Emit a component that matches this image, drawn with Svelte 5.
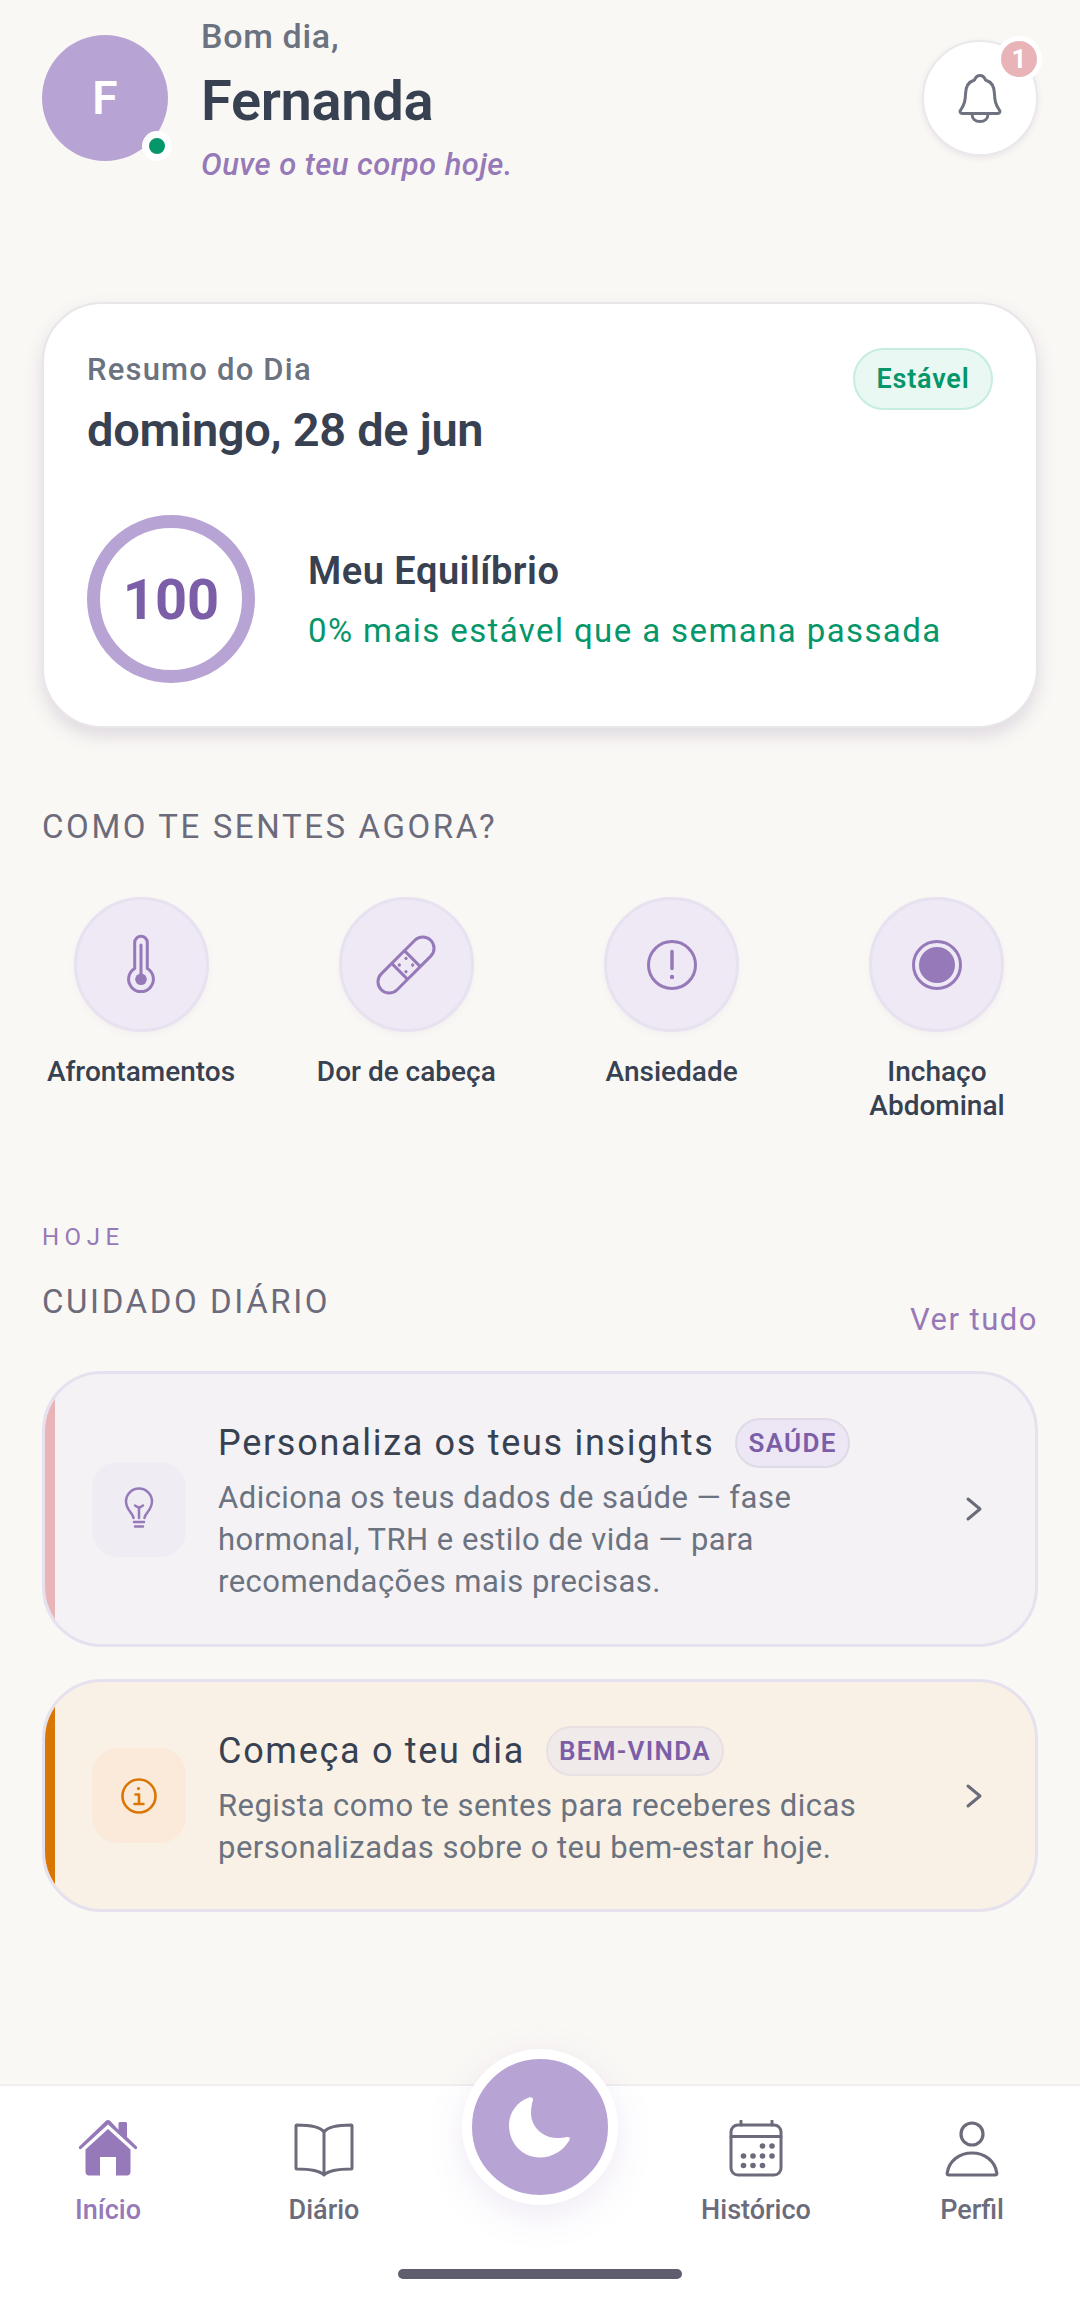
<script lang="ts">
  const symptoms = [
    { id: "thermo", label: "Afrontamentos" },
    { id: "band", label: "Dor de cabeça" },
    { id: "alert", label: "Ansiedade" },
    { id: "target", label: "Inchaço Abdominal" },
  ];
</script>

<div class="screen">
  <main>
    <header>
      <div class="avatar">
        F
        <span class="online"></span>
      </div>
      <div class="hello">
        <p class="greet">Bom dia,</p>
        <h1>Fernanda</h1>
        <p class="motto">Ouve o teu corpo hoje.</p>
      </div>
      <button class="bell" aria-label="Notificações">
        <svg width="44" height="50" viewBox="0 0 44 50" fill="none" stroke="#6f7280" stroke-width="3" stroke-linecap="round" stroke-linejoin="round">
          <path d="M22 2.500c-3 0-4.500 2-5.500 4.500C10 9 7.500 14 7.500 21c0 8-2 12-4.500 15.500-1.500 2-1 4 1 4h36c2 0 2.500-2 1-4-2.500-3.500-4.500-7.500-4.500-15.500 0-7-2.500-12-9-14C26.500 4.500 25 2.500 22 2.500z" />
          <path d="M14 41c0 5 3.500 7.500 8 7.500s8-2.500 8-7.500" />
        </svg>
        <span class="badge">1</span>
      </button>
    </header>

    <section class="summary">
      <div class="summary-top">
        <div>
          <p class="resumo">Resumo do Dia</p>
          <h2>domingo, 28 de jun</h2>
        </div>
        <span class="stable">Estável</span>
      </div>
      <div class="balance">
        <div class="ring">100</div>
        <div>
          <h3>Meu Equilíbrio</h3>
          <p class="delta">0% mais estável que a semana passada</p>
        </div>
      </div>
    </section>

    <h4 class="feel">COMO TE SENTES AGORA?</h4>
    <div class="symptoms">
      {#each symptoms as s}
        <div class="symptom">
          <div class="sym-icon">
            <svg width="62" height="62" viewBox="0 0 62 62" fill="none" stroke="#9679b8" stroke-width="3">
              {#if s.id === "thermo"}
                <path d="M24.700 8.600a6.300 6.300 0 0 1 12.600 0V34.500a12.400 12.400 0 1 1-12.600 0z" />
                <path d="M31 11v31" stroke-linecap="round" />
                <circle cx="31" cy="45.300" r="5.800" fill="#9679b8" stroke="none" />
              {:else if s.id === "band"}
                <g transform="rotate(45 31 31)">
                  <rect x="19.750" y="-4" width="22.500" height="70" rx="11.250" />
                  <path d="M19.750 22h22.500M19.750 40h22.500" />
                  <g fill="#9679b8" stroke="none">
                    <circle cx="26.300" cy="26.300" r="1.600" />
                    <circle cx="35.700" cy="26.300" r="1.600" />
                    <circle cx="26.300" cy="35.700" r="1.600" />
                    <circle cx="35.700" cy="35.700" r="1.600" />
                  </g>
                </g>
              {:else if s.id === "alert"}
                <circle cx="31" cy="31" r="23.500" />
                <path d="M31 17.500v17" stroke-width="3.500" stroke-linecap="round" />
                <circle cx="31" cy="43" r="2.200" fill="#9679b8" stroke="none" />
              {:else}
                <circle cx="31" cy="31" r="23.500" />
                <circle cx="31" cy="31" r="18" fill="#9679b8" stroke="none" />
              {/if}
            </svg>
          </div>
          <span>{s.label}</span>
        </div>
      {/each}
    </div>

    <p class="today">HOJE</p>
    <div class="care-head">
      <h4>CUIDADO DIÁRIO</h4>
      <a href="#top">Ver tudo</a>
    </div>

    <article class="task health">
      <div class="task-icon">
        <svg width="36" height="44" viewBox="0 0 36 44" fill="none" stroke="#9679b8" stroke-width="2.500" stroke-linecap="round" stroke-linejoin="round">
          <path d="M12.500 31c0-4-7.500-8-7.500-16.500a13 13 0 0 1 26 0C31 23 23.500 27 23.500 31" />
          <path d="M18 31V20M14 18.500l4 2.500 4-2.500" />
          <path d="M13 35h10M14 39.500h8" />
        </svg>
      </div>
      <div class="task-body">
        <div class="task-title"><h5>Personaliza os teus insights</h5><span class="tag">SAÚDE</span></div>
        <p>Adiciona os teus dados de saúde — fase hormonal, TRH e estilo de vida — para recomendações mais precisas.</p>
      </div>
      <svg class="chev" width="18" height="26" viewBox="0 0 18 26" fill="none" stroke="#6b6b7b" stroke-width="3" stroke-linecap="round" stroke-linejoin="round"><path d="M3 3l12 10L3 23" /></svg>
    </article>

    <article class="task welcome">
      <div class="task-icon">
        <svg width="38" height="38" viewBox="0 0 38 38" fill="none" stroke="#d97706" stroke-width="2.600" stroke-linecap="round" stroke-linejoin="round">
          <circle cx="19" cy="19" r="16.500" />
          <path d="M15.500 17.500H19v9M14.500 27h9" />
          <circle cx="18.500" cy="11.500" r="1.600" fill="#d97706" stroke="none" />
        </svg>
      </div>
      <div class="task-body">
        <div class="task-title"><h5>Começa o teu dia</h5><span class="tag">BEM-VINDA</span></div>
        <p>Regista como te sentes para receberes dicas personalizadas sobre o teu bem-estar hoje.</p>
      </div>
      <svg class="chev" width="18" height="26" viewBox="0 0 18 26" fill="none" stroke="#6b6b7b" stroke-width="3" stroke-linecap="round" stroke-linejoin="round"><path d="M3 3l12 10L3 23" /></svg>
    </article>
  </main>

  <nav>
    <div class="nav-item active">
      <svg width="60" height="58" viewBox="0 0 60 58" fill="#9679b8">
        <path d="M30 0c-.8 0-1.500.3-2 .8L1.200 26.500a1.600 1.600 0 0 0 2.200 2.300L30 4.500l26.600 24.300a1.600 1.600 0 0 0 2.200-2.300L49 17V3.500c0-.8-.7-1.500-1.500-1.500h-5.500c-.8 0-1.500.7-1.500 1.500v6.300L32 .8C31.500.3 30.800 0 30 0z" />
        <path d="M30 9L7.500 29.500V52c0 2 1.500 3.500 3.500 3.500h11V37h16v18.500h11c2 0 3.500-1.500 3.500-3.500V29.500z" />
      </svg>
      <span>Início</span>
    </div>
    <div class="nav-item">
      <svg width="60" height="58" viewBox="0 0 60 58" fill="none" stroke="#6b6b7b" stroke-width="3" stroke-linecap="round" stroke-linejoin="round">
        <path d="M30 12C26 6.500 17 5 3 5c-.8 0-1 .5-1 1v42c0 .8.400 1 1 1 13 0 22 1 27 6 5-5 14-6 27-6 .6 0 1-.2 1-1V6c0-.5-.2-1-1-1-14 0-23 1.500-27 7zM30 12v42" />
      </svg>
      <span>Diário</span>
    </div>
    <div class="nav-item spacer"></div>
    <div class="nav-item">
      <svg width="60" height="58" viewBox="0 0 60 58" fill="none" stroke="#6b6b7b" stroke-width="3" stroke-linecap="round" stroke-linejoin="round">
        <rect x="5" y="5" width="50" height="50" rx="7" />
        <path d="M5 16.500h50M15 1v4M46 1v4" />
        <g fill="#6b6b7b" stroke="none">
          {#each [[36.500,26],[46,26],[17.500,36],[27,36],[36.500,36],[46,36],[17.500,45.500],[27,45.500],[36.500,45.500]] as [cx, cy]}
            <circle {cx} {cy} r="2.800" />
          {/each}
        </g>
      </svg>
      <span>Histórico</span>
    </div>
    <div class="nav-item">
      <svg width="60" height="58" viewBox="0 0 60 58" fill="none" stroke="#6b6b7b" stroke-width="3.200" stroke-linecap="round" stroke-linejoin="round">
        <circle cx="30" cy="14" r="11" />
        <path d="M7 55c-1.500 0-2-.8-1.800-2C7 41 17 33 30 33s23 8 24.800 20c.2 1.200-.3 2-1.800 2z" />
      </svg>
      <span>Perfil</span>
    </div>

    <button class="fab" aria-label="Modo noite">
      <svg width="66" height="66" viewBox="0 0 66 66" fill="#fff">
        <path d="M22 3.500C11 7 2 18 2 31c0 18 13 32.500 31 32.500 13 0 24-7.500 29.500-17.500 1-2.500-.5-3.500-2.500-3-3 .8-7 1-10 1-14 0-26-11-26-25 0-5 .8-9 2-13 .5-2-2-3.200-4-2.500z" />
      </svg>
    </button>
    <div class="home-bar"></div>
  </nav>
</div>

<style>
  :global(body) {
    margin: 0;
    background: #faf8f5;
  }
  * { box-sizing: border-box; }
  .screen {
    width: 1080px;
    height: 2305px;
    display: flex;
    flex-direction: column;
    font-family: Roboto, "Liberation Sans", sans-serif;
    color: #374151;
    overflow: hidden;
  }
  main {
    flex: 1;
    padding: 12px 42px 0;
  }
  header {
    display: flex;
    align-items: flex-start;
    height: 170px;
  }
  .avatar {
    position: relative;
    width: 126px;
    height: 126px;
    margin-top: 23px;
    border-radius: 50%;
    background: #b8a4d4;
    color: #fff;
    display: flex;
    align-items: center;
    justify-content: center;
    font-size: 46px;
    font-weight: 600;
  }
  .online {
    position: absolute;
    right: -4px;
    bottom: 0;
    width: 30px;
    height: 30px;
    border-radius: 50%;
    background: #059669;
    border: 7px solid #fff;
  }
  .hello { margin-left: 33px; flex: 1; }
  .greet {
    margin: 0;
    font-size: 34px;
    line-height: 48px;
    color: #6b7280;
    font-weight: 500;
    letter-spacing: 0.7px;
  }
  h1 {
    margin: 5px 0 0;
    font-size: 56px;
    line-height: 72px;
    font-weight: 600;
    letter-spacing: -0.3px;
  }
  .motto {
    margin: 8px 0 0;
    font-size: 31px;
    line-height: 40px;
    font-style: italic;
    font-weight: 500;
    letter-spacing: 0.45px;
    color: #9679b8;
  }
  .bell {
    position: relative;
    width: 116px;
    height: 116px;
    margin-top: 28px;
    padding: 0;
    border-radius: 50%;
    background: #fff;
    border: 2px solid #ebe8ec;
    box-shadow: 0 2px 6px rgba(80, 60, 110, 0.1);
    display: flex;
    align-items: center;
    justify-content: center;
    font-family: inherit;
  }
  .badge {
    position: absolute;
    top: -6px;
    right: -6px;
    width: 46px;
    height: 46px;
    border-radius: 50%;
    background: #e8b4b8;
    border: 5px solid #fff;
    color: #fff;
    font-size: 26px;
    font-weight: 700;
    line-height: 36px;
    text-align: center;
  }
  .summary {
    margin-top: 120px;
    height: 426px;
    padding: 44px 43px 0;
    border-radius: 60px;
    background: #fff;
    border: 2px solid #e9e6ea;
    box-shadow: 0 8px 18px rgba(80, 60, 110, 0.16);
  }
  .summary-top {
    display: flex;
    justify-content: space-between;
    align-items: flex-start;
  }
  .resumo {
    margin: 0;
    padding-top: 2px;
    font-size: 31px;
    line-height: 40px;
    font-weight: 500;
    letter-spacing: 1.2px;
    color: #6b7280;
  }
  h2 {
    margin: 10px 0 0;
    font-size: 47px;
    line-height: 60px;
    font-weight: 600;
    letter-spacing: -0.3px;
  }
  .stable {
    width: 140px;
    height: 62px;
    border-radius: 31px;
    background: #e9f8f2;
    border: 2px solid #c6eddf;
    color: #059669;
    font-size: 27px;
    font-weight: 600;
    line-height: 58px;
    letter-spacing: 0.8px;
    text-align: center;
  }
  .balance {
    display: flex;
    align-items: center;
    gap: 53px;
    margin-top: 55px;
  }
  .ring {
    width: 168px;
    height: 168px;
    padding-top: 2px;
    border-radius: 50%;
    border: 13px solid #b8a4d4;
    display: flex;
    align-items: center;
    justify-content: center;
    font-size: 56px;
    font-weight: 700;
    color: #7b5ea7;
  }
  h3 {
    margin: 2px 0 0;
    font-size: 38px;
    line-height: 46px;
    font-weight: 600;
    letter-spacing: 0.5px;
  }
  .delta {
    margin: 15px 0 0;
    font-size: 33px;
    line-height: 44px;
    letter-spacing: 1.4px;
    color: #059669;
  }
  .feel, .care-head h4 {
    margin: 0;
    font-size: 33px;
    line-height: 40px;
    font-weight: 400;
    letter-spacing: 2.6px;
    color: #6b6b7b;
  }
  .feel { margin-top: 79px; }
  .symptoms {
    display: grid;
    grid-template-columns: repeat(4, 198px);
    justify-content: space-between;
    margin-top: 50px;
    padding-right: 2px;
  }
  .symptom {
    display: flex;
    flex-direction: column;
    align-items: center;
    text-align: center;
    height: 324px;
  }
  .symptom span {
    width: 198px;
    margin-top: 23px;
    font-size: 28px;
    line-height: 34px;
    font-weight: 500;
  }
  .sym-icon {
    width: 135px;
    height: 135px;
    border-radius: 50%;
    background: #efe9f6;
    border: 3px solid #e7e1f0;
    box-shadow: 0 3px 6px rgba(120, 100, 150, 0.06);
    display: flex;
    align-items: center;
    justify-content: center;
  }
  .today {
    margin: 0;
    font-size: 24px;
    line-height: 32px;
    letter-spacing: 5.5px;
    color: #9679b8;
  }
  .care-head {
    display: flex;
    justify-content: space-between;
    align-items: flex-end;
    margin-top: 29px;
  }
  .care-head a {
    font-size: 31px;
    line-height: 40px;
    letter-spacing: 1.5px;
    color: #9679b8;
    text-decoration: none;
    margin-bottom: -18px;
  }
  .task {
    position: relative;
    overflow: hidden;
    display: flex;
    align-items: center;
    margin-top: 32px;
    padding: 0 50px 0 47px;
    border-radius: 60px;
    border: 3px solid #e6e1ee;
  }
  .task::before {
    content: "";
    position: absolute;
    left: 0;
    top: 0;
    bottom: 0;
    width: 10px;
  }
  .health { height: 276px; background: #f4f2f5; margin-top: 49px; }
  .health::before { background: #e8b4b8; }
  .welcome { height: 233px; background: #f9f1e6; }
  .welcome::before { background: #d97706; }
  .task-icon {
    flex: none;
    width: 94px;
    height: 95px;
    border-radius: 26px;
    background: #efecf3;
    display: flex;
    align-items: center;
    justify-content: center;
  }
  .welcome .task-icon { background: #fbeada; }
  .task-body { flex: 1; margin-left: 32px; padding-top: 3px; }
  .task-title {
    display: flex;
    align-items: center;
    gap: 21px;
    margin-bottom: 9px;
  }
  h5 {
    margin: 0;
    font-size: 36px;
    line-height: 48px;
    font-weight: 400;
    letter-spacing: 1.7px;
  }
  .tag {
    height: 50px;
    padding: 0 11px;
    border-radius: 25px;
    background: #ede7f5;
    border: 2px solid #dfdae6;
    color: #7b5ea7;
    font-size: 26px;
    font-weight: 600;
    line-height: 46px;
    letter-spacing: 1.3px;
  }
  .welcome .tag { background: #f0eaea; border-color: #e8e0e2; }
  .task-body p {
    margin: 0;
    max-width: 640px;
    font-size: 31px;
    line-height: 42px;
    letter-spacing: 0.47px;
    color: #6b7280;
  }
  .welcome .task-body p { max-width: 700px; }
  .chev { flex: none; margin: 0 2px 0 30px; }
  nav {
    position: relative;
    flex: none;
    height: 221px;
    background: #fff;
    border-top: 2px solid #f0eeee;
    display: grid;
    grid-template-columns: repeat(5, 216px);
    padding-top: 34px;
  }
  .nav-item {
    display: flex;
    flex-direction: column;
    align-items: center;
    font-size: 27px;
    font-weight: 500;
    color: #6b6b7b;
  }
  .nav-item svg { flex: none; }
  .nav-item span { margin-top: 15px; line-height: 34px; }
  .nav-item.active { color: #9679b8; }
  .fab {
    position: absolute;
    left: 462px;
    top: -37px;
    width: 156px;
    height: 156px;
    padding: 0;
    border-radius: 50%;
    background: #b8a4d4;
    border: 10px solid #fff;
    box-shadow: 0 10px 36px rgba(150, 121, 184, 0.16);
    display: flex;
    align-items: center;
    justify-content: center;
  }
  .home-bar {
    position: absolute;
    left: 398px;
    bottom: 26px;
    width: 284px;
    height: 10px;
    border-radius: 5px;
    background: #5e5e6e;
  }
</style>
